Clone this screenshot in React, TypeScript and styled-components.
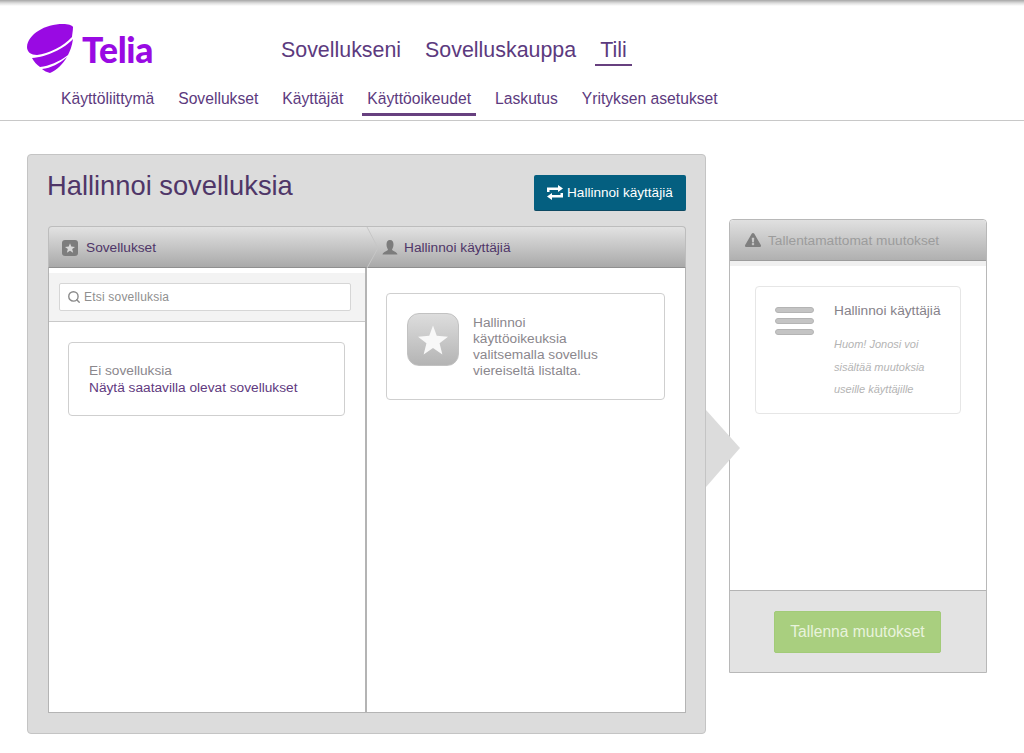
import React from "react";
import styled, { createGlobalStyle } from "styled-components";
import { FaExclamationTriangle } from "react-icons/fa";
import { Search } from "lucide-react";

const GlobalStyle = createGlobalStyle`
  html, body {
    margin: 0;
    padding: 0;
    background: #fff;
    font-family: "Liberation Sans", Arial, sans-serif;
  }
  * { box-sizing: border-box; }
`;

const Page = styled.div`
  width: 1024px;
  height: 753px;
  overflow: hidden;
`;

const Header = styled.header`
  height: 121px;
  border-bottom: 1px solid #c8c8c8;
  background: linear-gradient(#a6a6a6, #dcdcdc 3px, #fff 6px);
  display: flex;
  flex-direction: column;
`;

const TopRow = styled.div`
  display: flex;
  padding: 24px 0 0 27px;
  height: 84px;
`;

const Logo = styled.div`
  width: 249px;
  display: flex;
  align-items: flex-start;
`;

const LogoWord = styled.span`
  font-family: "Lato", sans-serif;
  font-weight: 900;
  font-size: 35.5px;
  line-height: 48px;
  color: #990ae3;
  margin-left: 8px;
  margin-top: 2px;
  letter-spacing: -0.3px;
`;

const MainNav = styled.nav`
  display: flex;
  gap: 14px;
  height: 42px;
`;

const MainLink = styled.a<{ $active?: boolean }>`
  padding: 0 5px;
  font-size: 21.4px;
  line-height: 52px;
  height: 42px;
  color: #5c3a7e;
  border-bottom: 2.5px solid ${(p) => (p.$active ? "#67407f" : "transparent")};
`;

const SubNav = styled.nav`
  display: flex;
  gap: 14px;
  padding-left: 56px;
`;

const SubLink = styled.a<{ $active?: boolean }>`
  padding: 0 5px;
  height: 32px;
  font-size: 15.68px;
  line-height: 30px;
  color: #5c3a7e;
  border-bottom: 3px solid ${(p) => (p.$active ? "#67407f" : "transparent")};
`;

const Content = styled.main`
  display: flex;
  align-items: flex-start;
  padding: 33px 0 0 27px;
`;

const Panel = styled.section`
  position: relative;
  width: 679px;
  height: 580px;
  padding: 0 19px 0 20px;
  background: #dcdcdc;
  border: 1px solid #c4c4c4;
  border-radius: 4px;
`;

const PanelHead = styled.div`
  display: flex;
  justify-content: space-between;
  align-items: flex-start;
  height: 71px;
`;

const Title = styled.h1`
  margin: 13px 0 0 -1px;
  font-size: 27.3px;
  line-height: 36px;
  font-weight: 400;
  color: #4f3668;
`;

const SwitchButton = styled.button`
  margin-top: 20px;
  width: 152px;
  height: 36px;
  display: flex;
  align-items: center;
  gap: 3px;
  padding: 0 0 0 12px;
  border: 0;
  border-bottom: 1px solid #0d4a63;
  border-radius: 2px;
  background: #045f80;
  color: #fff;
  font-family: inherit;
  font-size: 13.6px;
`;

const Arrow = styled.svg`
  position: absolute;
  left: 678px;
  top: 255px;
`;

const Tabs = styled.div`
  display: grid;
  grid-template-columns: 318px 318px;
  height: 42px;
  border: 1px solid #bdbdbd;
  border-bottom: 1px solid #8f8f8f;
  border-radius: 4px 4px 0 0;
  background: linear-gradient(#e2e2e2, #a9a9a9);
`;

const Tab = styled.div`
  position: relative;
  display: flex;
  align-items: center;
  font-size: 13.7px;
  color: #4f3668;
  padding-top: 1px;
`;

const FirstTab = styled(Tab)`
  padding-left: 13px;
  gap: 8px;
`;

const SecondTab = styled(Tab)`
  padding-left: 15px;
  gap: 6px;
`;

const TabBadge = styled.span`
  width: 16px;
  height: 16px;
  display: grid;
  place-items: center;
  border-radius: 3px;
  background: #7d7d7d;
`;

const Chevron = styled.svg`
  position: absolute;
  right: -12px;
  top: 0;
  z-index: 1;
`;

const Columns = styled.div`
  display: grid;
  grid-template-columns: 318px 318px;
  height: 445px;
  background: #fff;
  border: 1px solid #b4b4b4;
  border-top: 0;
`;

const LeftColumn = styled.div`
  border-right: 2px solid #b4b4b4;
  padding-top: 5px;
`;

const SearchRow = styled.div`
  height: 49px;
  padding: 10px 14px 0 10px;
  background: #f3f3f3;
  border-bottom: 1px solid #c9c9c9;
`;

const SearchBox = styled.div`
  height: 28px;
  display: flex;
  align-items: center;
  gap: 3px;
  padding-left: 7px;
  background: #fff;
  border: 1px solid #d6d6d6;
  border-radius: 2px;
  color: #8f8f8f;
  font-size: 12px;
  letter-spacing: 0.2px;
  svg { color: #8a8a8a; }
`;

const EmptyCard = styled.div`
  margin: 20px 20px 0 19px;
  height: 74px;
  padding: 19px 20px 0;
  background: #fff;
  border: 1px solid #cfcfcf;
  border-radius: 4px;
  font-size: 13.7px;
  line-height: 17px;
  color: #8b878d;
`;

const CardLink = styled.a`
  display: block;
  color: #5f3a80;
`;

const RightColumn = styled.div`
  padding: 25px 20px 0 19px;
`;

const HintCard = styled.div`
  height: 107px;
  display: flex;
  padding: 19px 0 0 20px;
  gap: 14px;
  border: 1px solid #cfcfcf;
  border-radius: 4px;
`;

const HintIcon = styled.div`
  width: 52px;
  height: 53px;
  flex: none;
  display: grid;
  place-items: center;
  border: 1px solid #c2c2c2;
  border-radius: 12px;
  background: linear-gradient(#dddddd, #b4b4b4);
`;

const HintText = styled.p`
  margin: 2px 0 0;
  width: 140px;
  font-size: 13.7px;
  line-height: 16px;
  color: #8b878d;
`;

const SidePanel = styled.aside`
  width: 258px;
  height: 454px;
  margin: 65px 0 0 23px;
  display: flex;
  flex-direction: column;
  border: 1px solid #b8b8b8;
  border-radius: 4px 4px 0 0;
`;

const SideHead = styled.div`
  height: 41px;
  display: flex;
  align-items: center;
  gap: 7px;
  padding-left: 15px;
  background: linear-gradient(#e0e0e0, #b0b0b0);
  border-bottom: 1px solid #9c9c9c;
  border-radius: 4px 4px 0 0;
  color: #9c9c9c;
  font-size: 13.7px;
  svg { font-size: 16px; color: #7f7f7f; }
`;

const SideBody = styled.div`
  flex: 1;
  padding: 25px 25px 0;
  background: linear-gradient(#f0f0f0 5px, #fff 5px);
`;

const QueueCard = styled.div`
  height: 128px;
  display: flex;
  gap: 20px;
  padding: 20px 0 0 19px;
  border: 1px solid #e6e6e6;
  border-radius: 4px;
`;

const Bars = styled.div`
  width: 39px;
  flex: none;
  display: flex;
  flex-direction: column;
  gap: 5px;
`;

const Bar = styled.span`
  height: 6px;
  background: #c4c4c4;
  border: 1px solid #b4b4b4;
  border-radius: 3px;
`;

const QueueTitle = styled.div`
  font-size: 13.7px;
  line-height: 17px;
  margin-top: -5px;
  color: #86828a;
`;

const QueueNote = styled.p`
  margin: 14px 0 0;
  font-size: 11px;
  line-height: 22.5px;
  font-style: italic;
  color: #b4b4b4;
`;

const SideFoot = styled.div`
  height: 82px;
  display: flex;
  padding: 20px 0 0 44px;
  background: #e3e3e3;
  border-top: 1px solid #b4b4b4;
`;

const SaveButton = styled.button`
  width: 167px;
  height: 42px;
  padding: 0;
  border: 1px solid #a2cb78;
  border-radius: 2px;
  background: #a9cf7f;
  color: #e8f3dc;
  font-family: inherit;
  font-size: 15.6px;
`;

function TeliaMark() {
  return (
    <svg width="47" height="50" viewBox="0 0 47 50" fill="#990ae3">
      <path d="M0 23C1 10 18 0 36 0C41 0 45 1 46 3C46 7 45 11 45 13C37 22 21 30 10 31C4 31 0 28 0 23Z" />
      <path d="M5 34C20 33 38 24 46 15C45 22 43 27 41 31C32 38 22 42 13 43C10 41 7 38 5 34Z" />
      <path d="M15 45C24 44 32 40 40 33C36 40 30 46 23 49C20 48 17 47 15 45Z" />
    </svg>
  );
}

function StarIcon({ size, color }: { size: number; color: string }) {
  return (
    <svg width={size} height={size} viewBox="0 0 32 31" fill={color}>
      <path d="M16 0L20 11L32 12L23 19L26 31L16 24L6 31L9 19L0 12L12 11Z" />
    </svg>
  );
}

function TransferIcon() {
  return (
    <svg width="18" height="15" viewBox="0 0 18 15" fill="#fff">
      <path d="M1 7V2.5H12V0L17 3.5L12 7V5H3.5V7Z" />
      <path d="M17 8V12.5H6V15L1 11.5L6 8V10H14.5V8Z" />
    </svg>
  );
}

function UserIcon() {
  return (
    <svg width="16" height="15" viewBox="0 0 16 15" fill="#7c7c7c">
      <path d="M8 0C10.5 0 11.5 2 11.5 4.5C11.5 7 10.5 8.5 10 9.5C10 11 15 11.5 15.5 14.5H0.5C1 11.5 6 11 6 9.5C5.5 8.5 4.5 7 4.5 4.5C4.5 2 5.5 0 8 0Z" />
    </svg>
  );
}

export default function App() {
  return (
    <Page>
      <GlobalStyle />
      <Header>
        <TopRow>
          <Logo>
            <TeliaMark />
            <LogoWord>Telia</LogoWord>
          </Logo>
          <MainNav>
            <MainLink>Sovellukseni</MainLink>
            <MainLink>Sovelluskauppa</MainLink>
            <MainLink $active>Tili</MainLink>
          </MainNav>
        </TopRow>
        <SubNav>
          <SubLink>Käyttöliittymä</SubLink>
          <SubLink>Sovellukset</SubLink>
          <SubLink>Käyttäjät</SubLink>
          <SubLink $active>Käyttöoikeudet</SubLink>
          <SubLink>Laskutus</SubLink>
          <SubLink>Yrityksen asetukset</SubLink>
        </SubNav>
      </Header>
      <Content>
        <Panel>
          <PanelHead>
            <Title>Hallinnoi sovelluksia</Title>
            <SwitchButton>
              <TransferIcon />
              Hallinnoi käyttäjiä
            </SwitchButton>
          </PanelHead>
          <Tabs>
            <FirstTab>
              <TabBadge>
                <StarIcon size={10} color="#d8d8d8" />
              </TabBadge>
              Sovellukset
              <Chevron width="13" height="41" viewBox="0 0 13 41" fill="none" stroke="#c6c6c6">
                <path d="M1 0L12 21L1 41" />
              </Chevron>
            </FirstTab>
            <SecondTab>
              <UserIcon />
              Hallinnoi käyttäjiä
            </SecondTab>
          </Tabs>
          <Columns>
            <LeftColumn>
              <SearchRow>
                <SearchBox>
                  <Search size={14} strokeWidth={2.4} />
                  Etsi sovelluksia
                </SearchBox>
              </SearchRow>
              <EmptyCard>
                Ei sovelluksia
                <CardLink>Näytä saatavilla olevat sovellukset</CardLink>
              </EmptyCard>
            </LeftColumn>
            <RightColumn>
              <HintCard>
                <HintIcon>
                  <StarIcon size={30} color="#f8f8f8" />
                </HintIcon>
                <HintText>Hallinnoi käyttöoikeuksia valitsemalla sovellus viereiseltä listalta.</HintText>
              </HintCard>
            </RightColumn>
          </Columns>
          <Arrow width="35" height="80" viewBox="0 0 35 80" fill="#dcdcdc">
            <path d="M0 0L34 38L0 77Z" />
          </Arrow>
        </Panel>
        <SidePanel>
          <SideHead>
            <FaExclamationTriangle />
            Tallentamattomat muutokset
          </SideHead>
          <SideBody>
            <QueueCard>
              <Bars>
                <Bar />
                <Bar />
                <Bar />
              </Bars>
              <div>
                <QueueTitle>Hallinnoi käyttäjiä</QueueTitle>
                <QueueNote>
                  Huom! Jonosi voi
                  <br />
                  sisältää muutoksia
                  <br />
                  useille käyttäjille
                </QueueNote>
              </div>
            </QueueCard>
          </SideBody>
          <SideFoot>
            <SaveButton>Tallenna muutokset</SaveButton>
          </SideFoot>
        </SidePanel>
      </Content>
    </Page>
  );
}
